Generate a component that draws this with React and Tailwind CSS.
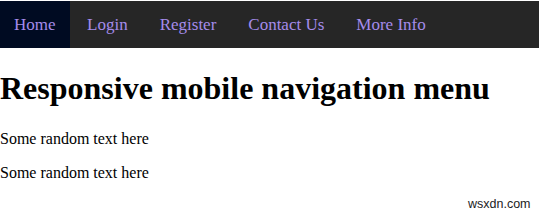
export default function App() {
  const items = ["Login", "Register", "Contact Us", "More Info"];
  return (
    <div className="relative w-[541px] h-[214px] bg-white overflow-hidden" style={{ fontFamily: '"Liberation Serif", "Times New Roman", serif' }}>
      <nav className="mt-px flex w-[539px] bg-[#262626] text-[17px] leading-[19px]">
        <a className="block bg-[#000b22] pl-[14px] pr-[14.5px] py-[14px] text-[#a58ceb]">Home</a>
        <div className="flex pl-px">
          {items.map((t) => (
            <a key={t} className="block px-4 py-[14px] text-[#a58ceb]">{t}</a>
          ))}
        </div>
      </nav>
      <h1 className="mt-[22px] mb-[23px] text-[32px] leading-[37px] font-bold text-black">Responsive mobile navigation menu</h1>
      <p className="my-4 text-[16px] leading-[18px] text-black">Some random text here</p>
      <p className="my-4 text-[16px] leading-[18px] text-black">Some random text here</p>
      <div className="absolute left-[468px] top-[197px] text-[12.5px] leading-[15px] text-[#222]" style={{ fontFamily: '"Liberation Sans", Arial, sans-serif' }}>wsxdn.com</div>
    </div>
  );
}
